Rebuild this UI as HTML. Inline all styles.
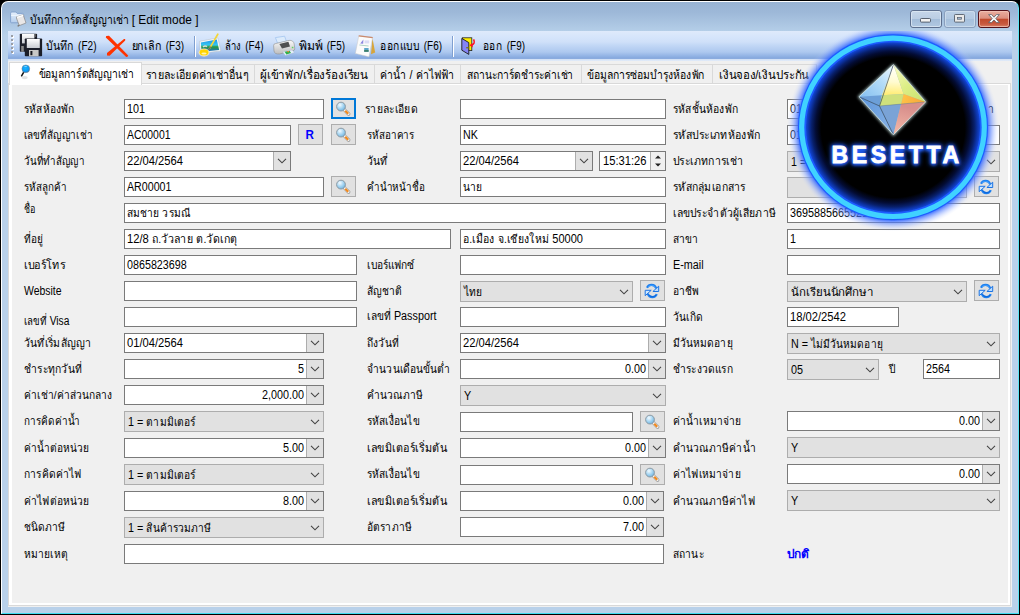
<!DOCTYPE html><html><head><meta charset="utf-8"><title>form</title><style>
*{box-sizing:border-box;margin:0;padding:0}
html,body{width:1020px;height:615px;overflow:hidden;background:#000}
body{font-family:"Liberation Sans",sans-serif;font-size:12px;color:#000;position:relative}
.a{position:absolute}
#win{position:absolute;left:0;top:0;width:1020px;height:615px;background:#000;overflow:hidden}
#frame{position:absolute;left:1px;top:1px;width:1018px;height:613px;border-radius:7px 7px 0 0;background:linear-gradient(#98b3d3 0px,#9db8d8 10px,#b4cee8 29px,#b9d1ea 34px);border:1px solid #fff;border-right-color:#5ee6f5;border-bottom-color:#3fdcf0}
#client{position:absolute;left:8px;top:31px;width:1004px;height:576px;background:#f0f0f0}
#tb{position:absolute;left:0;top:0;width:1004px;height:28px;background:linear-gradient(#dfeafb 0,#d6e5fb 6px,#cfe0f9 11px,#c3d8f6 14px,#adc8ef 21px,#92b3e5 25px,#86a8dd 27px,#8eaee0 28px)}
#tbl{position:absolute;left:0;top:28px;width:1004px;height:2px;background:linear-gradient(#cfdff5,#e2ecf9)}
.sep{position:absolute;top:5px;width:2px;height:21px;border-left:1px solid #7f9fd0;border-right:1px solid #fff}
.in{position:absolute;height:20px;background:#fff;border:1px solid #7a7a7a}
.dd{position:absolute;height:21px;background:#e1e1e1;border:1px solid #adadad}
.ab{position:absolute;top:0;right:0;width:17px;height:18px;background:#e1e1e1;border-left:1px solid #adadad}
.ab .ch{left:3px;top:6px}
.ch{position:absolute;width:10px;height:6px}
.btn{position:absolute;width:25px;height:21px;background:#e1e1e1;border:1px solid #adadad}
.btn.fo{border:2px solid #0078d7}
.btn .ic{position:absolute;left:3px;top:2px}
.btn.fo .ic{left:2px;top:1px}
.tab{position:absolute;top:33px;height:19px;border:1px solid #d9d9d9;border-bottom:none;background:#f0f0f0}
#tabsel{position:absolute;left:1px;top:31px;width:133px;height:23px;background:#fff;border:1px solid #d9d9d9;border-bottom:none}
#page{position:absolute;left:0;top:52px;width:1003px;height:523px;border:1px solid #d9d9d9;background:#fff}
#pagein{position:absolute;left:3px;top:1px;width:996px;height:518px;background:#f0f0f0}
#txt{position:absolute;left:0;top:0;width:1020px;height:615px;font-family:"Liberation Sans",sans-serif}
</style></head><body>
<div id="win"><div id="frame"></div>
<div id="client"><div id="tb"></div><div id="tbl"></div>
<div class="sep" style="left:186px"></div>
<div class="sep" style="left:444px"></div>
<div id="page"><div id="pagein"></div></div>
<div class="tab" style="left:133px;width:114px"></div>
<div class="tab" style="left:246px;width:121px"></div>
<div class="tab" style="left:366px;width:87px"></div>
<div class="tab" style="left:452px;width:122px"></div>
<div class="tab" style="left:573px;width:132px"></div>
<div class="tab" style="left:704px;width:105px"></div>
<div id="tabsel"></div>
</div>
<div class="in" style="left:124px;top:99px;width:200px;height:20px"></div>
<div class="btn fo" style="left:331px;top:98px"><svg class="ic" width="16" height="16" viewBox="0 0 16 16"><path d="M9.2 8.6 L13.6 13" stroke="#8c8c8c" stroke-width="3.4" stroke-linecap="round"/><path d="M9.6 9 L13.5 12.9" stroke="#f3f3f3" stroke-width="2.4" stroke-linecap="round"/><path d="M10.2 9.7 L13.2 12.7" stroke="#f28a1e" stroke-width="2.2" stroke-linecap="butt"/><circle cx="6" cy="5.6" r="4.4" fill="url(#lg)" stroke="#8d9aa3" stroke-width="1"/></svg></div>
<div class="in" style="left:460px;top:99px;width:206px;height:20px"></div>
<div class="in" style="left:787px;top:99px;width:93px;height:20px"></div>
<div class="in" style="left:124px;top:125px;width:167px;height:20px"></div>
<div class="btn" style="left:298px;top:124px"></div>
<div class="btn" style="left:331px;top:124px"><svg class="ic" width="16" height="16" viewBox="0 0 16 16"><path d="M9.2 8.6 L13.6 13" stroke="#8c8c8c" stroke-width="3.4" stroke-linecap="round"/><path d="M9.6 9 L13.5 12.9" stroke="#f3f3f3" stroke-width="2.4" stroke-linecap="round"/><path d="M10.2 9.7 L13.2 12.7" stroke="#f28a1e" stroke-width="2.2" stroke-linecap="butt"/><circle cx="6" cy="5.6" r="4.4" fill="url(#lg)" stroke="#8d9aa3" stroke-width="1"/></svg></div>
<div class="in" style="left:460px;top:125px;width:206px;height:20px"></div>
<div class="in" style="left:787px;top:125px;width:213px;height:20px"></div>
<div class="in" style="left:124px;top:151px;width:167px"><div class="ab"><svg class="ch" viewBox="0 0 10 6"><path d="M1 0.8 L5 4.8 L9 0.8" fill="none" stroke="#444" stroke-width="1.1"/></svg></div></div>
<div class="in" style="left:460px;top:151px;width:133px"><div class="ab"><svg class="ch" viewBox="0 0 10 6"><path d="M1 0.8 L5 4.8 L9 0.8" fill="none" stroke="#444" stroke-width="1.1"/></svg></div></div>
<div class="in" style="left:599px;top:151px;width:67px"><div class="ab" style="width:15px;background:#f0f0f0"><svg class="a" style="left:3px;top:2px" width="8" height="14" viewBox="0 0 8 14"><path d="M1 4.6 L4 1.6 L7 4.6Z M1 9.6 L4 12.6 L7 9.6Z" fill="#222"/></svg></div></div>
<div class="dd" style="left:787px;top:151px;width:213px"><svg class="ch" style="right:3px;top:7px" viewBox="0 0 10 6"><path d="M1 0.8 L5 4.8 L9 0.8" fill="none" stroke="#444" stroke-width="1.1"/></svg></div>
<div class="in" style="left:124px;top:177px;width:200px;height:20px"></div>
<div class="btn" style="left:331px;top:176px"><svg class="ic" width="16" height="16" viewBox="0 0 16 16"><path d="M9.2 8.6 L13.6 13" stroke="#8c8c8c" stroke-width="3.4" stroke-linecap="round"/><path d="M9.6 9 L13.5 12.9" stroke="#f3f3f3" stroke-width="2.4" stroke-linecap="round"/><path d="M10.2 9.7 L13.2 12.7" stroke="#f28a1e" stroke-width="2.2" stroke-linecap="butt"/><circle cx="6" cy="5.6" r="4.4" fill="url(#lg)" stroke="#8d9aa3" stroke-width="1"/></svg></div>
<div class="in" style="left:460px;top:177px;width:206px;height:20px"></div>
<div class="dd" style="left:787px;top:177px;width:180px"><svg class="ch" style="right:3px;top:7px" viewBox="0 0 10 6"><path d="M1 0.8 L5 4.8 L9 0.8" fill="none" stroke="#444" stroke-width="1.1"/></svg></div>
<div class="btn" style="left:974px;top:176px"><svg class="ic" width="16" height="16" viewBox="0 0 16 16"><path d="M3 4.7 C4.6 1.1 10.6 0.5 12.3 5.4" fill="none" stroke="#1c7ff0" stroke-width="2.1"/><path d="M4 4 C5.6 1.9 9.6 1.6 11.4 4.4" fill="none" stroke="#49a6ff" stroke-width="0.9"/><polygon points="14.7,3.2 14.7,8.5 8.9,8.5" fill="#b9dcff" stroke="#1c74e4" stroke-width="1" stroke-linejoin="round"/><path d="M12.8 11.2 C11.4 14.9 5.4 15.5 3.7 10.6" fill="none" stroke="#1c7ff0" stroke-width="2.1"/><path d="M12 12 C10.4 14.1 6.4 14.4 4.6 11.6" fill="none" stroke="#0b5fd0" stroke-width="0.9"/><polygon points="1.2,7.3 1.2,12.7 7.2,7.3" fill="#cfe8ff" stroke="#1c74e4" stroke-width="1" stroke-linejoin="round"/></svg></div>
<div class="in" style="left:124px;top:203px;width:542px;height:20px"></div>
<div class="in" style="left:787px;top:203px;width:213px;height:20px"></div>
<div class="in" style="left:124px;top:229px;width:327px;height:20px"></div>
<div class="in" style="left:460px;top:229px;width:206px;height:20px"></div>
<div class="in" style="left:787px;top:229px;width:213px;height:20px"></div>
<div class="in" style="left:124px;top:255px;width:233px;height:20px"></div>
<div class="in" style="left:460px;top:255px;width:206px;height:20px"></div>
<div class="in" style="left:787px;top:255px;width:213px;height:20px"></div>
<div class="in" style="left:124px;top:281px;width:233px;height:20px"></div>
<div class="dd" style="left:460px;top:281px;width:173px"><svg class="ch" style="right:3px;top:7px" viewBox="0 0 10 6"><path d="M1 0.8 L5 4.8 L9 0.8" fill="none" stroke="#444" stroke-width="1.1"/></svg></div>
<div class="btn" style="left:640px;top:280px"><svg class="ic" width="16" height="16" viewBox="0 0 16 16"><path d="M3 4.7 C4.6 1.1 10.6 0.5 12.3 5.4" fill="none" stroke="#1c7ff0" stroke-width="2.1"/><path d="M4 4 C5.6 1.9 9.6 1.6 11.4 4.4" fill="none" stroke="#49a6ff" stroke-width="0.9"/><polygon points="14.7,3.2 14.7,8.5 8.9,8.5" fill="#b9dcff" stroke="#1c74e4" stroke-width="1" stroke-linejoin="round"/><path d="M12.8 11.2 C11.4 14.9 5.4 15.5 3.7 10.6" fill="none" stroke="#1c7ff0" stroke-width="2.1"/><path d="M12 12 C10.4 14.1 6.4 14.4 4.6 11.6" fill="none" stroke="#0b5fd0" stroke-width="0.9"/><polygon points="1.2,7.3 1.2,12.7 7.2,7.3" fill="#cfe8ff" stroke="#1c74e4" stroke-width="1" stroke-linejoin="round"/></svg></div>
<div class="dd" style="left:787px;top:281px;width:180px"><svg class="ch" style="right:3px;top:7px" viewBox="0 0 10 6"><path d="M1 0.8 L5 4.8 L9 0.8" fill="none" stroke="#444" stroke-width="1.1"/></svg></div>
<div class="btn" style="left:974px;top:280px"><svg class="ic" width="16" height="16" viewBox="0 0 16 16"><path d="M3 4.7 C4.6 1.1 10.6 0.5 12.3 5.4" fill="none" stroke="#1c7ff0" stroke-width="2.1"/><path d="M4 4 C5.6 1.9 9.6 1.6 11.4 4.4" fill="none" stroke="#49a6ff" stroke-width="0.9"/><polygon points="14.7,3.2 14.7,8.5 8.9,8.5" fill="#b9dcff" stroke="#1c74e4" stroke-width="1" stroke-linejoin="round"/><path d="M12.8 11.2 C11.4 14.9 5.4 15.5 3.7 10.6" fill="none" stroke="#1c7ff0" stroke-width="2.1"/><path d="M12 12 C10.4 14.1 6.4 14.4 4.6 11.6" fill="none" stroke="#0b5fd0" stroke-width="0.9"/><polygon points="1.2,7.3 1.2,12.7 7.2,7.3" fill="#cfe8ff" stroke="#1c74e4" stroke-width="1" stroke-linejoin="round"/></svg></div>
<div class="in" style="left:124px;top:307px;width:233px;height:20px"></div>
<div class="in" style="left:460px;top:307px;width:206px;height:20px"></div>
<div class="in" style="left:787px;top:307px;width:112px;height:20px"></div>
<div class="in" style="left:124px;top:333px;width:200px"><div class="ab"><svg class="ch" viewBox="0 0 10 6"><path d="M1 0.8 L5 4.8 L9 0.8" fill="none" stroke="#444" stroke-width="1.1"/></svg></div></div>
<div class="in" style="left:460px;top:333px;width:206px"><div class="ab"><svg class="ch" viewBox="0 0 10 6"><path d="M1 0.8 L5 4.8 L9 0.8" fill="none" stroke="#444" stroke-width="1.1"/></svg></div></div>
<div class="dd" style="left:787px;top:333px;width:213px"><svg class="ch" style="right:3px;top:7px" viewBox="0 0 10 6"><path d="M1 0.8 L5 4.8 L9 0.8" fill="none" stroke="#444" stroke-width="1.1"/></svg></div>
<div class="in" style="left:124px;top:359px;width:200px"><div class="ab"><svg class="ch" viewBox="0 0 10 6"><path d="M1 0.8 L5 4.8 L9 0.8" fill="none" stroke="#444" stroke-width="1.1"/></svg></div></div>
<div class="in" style="left:460px;top:359px;width:206px"><div class="ab"><svg class="ch" viewBox="0 0 10 6"><path d="M1 0.8 L5 4.8 L9 0.8" fill="none" stroke="#444" stroke-width="1.1"/></svg></div></div>
<div class="dd" style="left:787px;top:359px;width:92px"><svg class="ch" style="right:3px;top:7px" viewBox="0 0 10 6"><path d="M1 0.8 L5 4.8 L9 0.8" fill="none" stroke="#444" stroke-width="1.1"/></svg></div>
<div class="in" style="left:923px;top:359px;width:77px;height:20px"></div>
<div class="in" style="left:124px;top:385px;width:200px"><div class="ab"><svg class="ch" viewBox="0 0 10 6"><path d="M1 0.8 L5 4.8 L9 0.8" fill="none" stroke="#444" stroke-width="1.1"/></svg></div></div>
<div class="dd" style="left:460px;top:385px;width:206px"><svg class="ch" style="right:3px;top:7px" viewBox="0 0 10 6"><path d="M1 0.8 L5 4.8 L9 0.8" fill="none" stroke="#444" stroke-width="1.1"/></svg></div>
<div class="dd" style="left:124px;top:411px;width:200px"><svg class="ch" style="right:3px;top:7px" viewBox="0 0 10 6"><path d="M1 0.8 L5 4.8 L9 0.8" fill="none" stroke="#444" stroke-width="1.1"/></svg></div>
<div class="in" style="left:460px;top:412px;width:173px;height:20px"></div>
<div class="btn" style="left:640px;top:411px"><svg class="ic" width="16" height="16" viewBox="0 0 16 16"><path d="M9.2 8.6 L13.6 13" stroke="#8c8c8c" stroke-width="3.4" stroke-linecap="round"/><path d="M9.6 9 L13.5 12.9" stroke="#f3f3f3" stroke-width="2.4" stroke-linecap="round"/><path d="M10.2 9.7 L13.2 12.7" stroke="#f28a1e" stroke-width="2.2" stroke-linecap="butt"/><circle cx="6" cy="5.6" r="4.4" fill="url(#lg)" stroke="#8d9aa3" stroke-width="1"/></svg></div>
<div class="in" style="left:787px;top:411px;width:213px"><div class="ab"><svg class="ch" viewBox="0 0 10 6"><path d="M1 0.8 L5 4.8 L9 0.8" fill="none" stroke="#444" stroke-width="1.1"/></svg></div></div>
<div class="in" style="left:124px;top:438px;width:200px"><div class="ab"><svg class="ch" viewBox="0 0 10 6"><path d="M1 0.8 L5 4.8 L9 0.8" fill="none" stroke="#444" stroke-width="1.1"/></svg></div></div>
<div class="in" style="left:460px;top:438px;width:206px"><div class="ab"><svg class="ch" viewBox="0 0 10 6"><path d="M1 0.8 L5 4.8 L9 0.8" fill="none" stroke="#444" stroke-width="1.1"/></svg></div></div>
<div class="dd" style="left:787px;top:437px;width:213px"><svg class="ch" style="right:3px;top:7px" viewBox="0 0 10 6"><path d="M1 0.8 L5 4.8 L9 0.8" fill="none" stroke="#444" stroke-width="1.1"/></svg></div>
<div class="dd" style="left:124px;top:464px;width:200px"><svg class="ch" style="right:3px;top:7px" viewBox="0 0 10 6"><path d="M1 0.8 L5 4.8 L9 0.8" fill="none" stroke="#444" stroke-width="1.1"/></svg></div>
<div class="in" style="left:460px;top:465px;width:173px;height:20px"></div>
<div class="btn" style="left:640px;top:464px"><svg class="ic" width="16" height="16" viewBox="0 0 16 16"><path d="M9.2 8.6 L13.6 13" stroke="#8c8c8c" stroke-width="3.4" stroke-linecap="round"/><path d="M9.6 9 L13.5 12.9" stroke="#f3f3f3" stroke-width="2.4" stroke-linecap="round"/><path d="M10.2 9.7 L13.2 12.7" stroke="#f28a1e" stroke-width="2.2" stroke-linecap="butt"/><circle cx="6" cy="5.6" r="4.4" fill="url(#lg)" stroke="#8d9aa3" stroke-width="1"/></svg></div>
<div class="in" style="left:787px;top:464px;width:213px"><div class="ab"><svg class="ch" viewBox="0 0 10 6"><path d="M1 0.8 L5 4.8 L9 0.8" fill="none" stroke="#444" stroke-width="1.1"/></svg></div></div>
<div class="in" style="left:124px;top:491px;width:200px"><div class="ab"><svg class="ch" viewBox="0 0 10 6"><path d="M1 0.8 L5 4.8 L9 0.8" fill="none" stroke="#444" stroke-width="1.1"/></svg></div></div>
<div class="in" style="left:460px;top:491px;width:204px"><div class="ab"><svg class="ch" viewBox="0 0 10 6"><path d="M1 0.8 L5 4.8 L9 0.8" fill="none" stroke="#444" stroke-width="1.1"/></svg></div></div>
<div class="dd" style="left:787px;top:490px;width:213px"><svg class="ch" style="right:3px;top:7px" viewBox="0 0 10 6"><path d="M1 0.8 L5 4.8 L9 0.8" fill="none" stroke="#444" stroke-width="1.1"/></svg></div>
<div class="dd" style="left:124px;top:517px;width:200px"><svg class="ch" style="right:3px;top:7px" viewBox="0 0 10 6"><path d="M1 0.8 L5 4.8 L9 0.8" fill="none" stroke="#444" stroke-width="1.1"/></svg></div>
<div class="in" style="left:460px;top:517px;width:204px"><div class="ab"><svg class="ch" viewBox="0 0 10 6"><path d="M1 0.8 L5 4.8 L9 0.8" fill="none" stroke="#444" stroke-width="1.1"/></svg></div></div>
<div class="in" style="left:124px;top:544px;width:540px;height:20px"></div>
<svg id="icons" style="position:absolute;left:0;top:0" width="1020" height="615" viewBox="0 0 1020 615">
<defs>
<radialGradient id="lg" cx="0.38" cy="0.32" r="0.75"><stop offset="0" stop-color="#f4fbff"/><stop offset="0.55" stop-color="#a2d3f1"/><stop offset="1" stop-color="#66aede"/></radialGradient>
<linearGradient id="fl" x1="0" y1="0" x2="0" y2="1"><stop offset="0" stop-color="#ffffff"/><stop offset="1" stop-color="#c9ccd2"/></linearGradient>
<linearGradient id="fo" x1="0" y1="0" x2="0" y2="1"><stop offset="0" stop-color="#e6f0fc"/><stop offset="1" stop-color="#b4cdec"/></linearGradient>
<linearGradient id="pr" x1="0" y1="0" x2="0" y2="1"><stop offset="0" stop-color="#fafafa"/><stop offset="1" stop-color="#bdbdbd"/></linearGradient>
<radialGradient id="ball" cx="0.45" cy="0.4" r="0.6"><stop offset="0" stop-color="#19b4ff"/><stop offset="0.7" stop-color="#0a9af6"/><stop offset="1" stop-color="#2a6fb0"/></radialGradient>
<linearGradient id="sky" x1="0" y1="0" x2="0" y2="1"><stop offset="0" stop-color="#1d8fe8"/><stop offset="0.45" stop-color="#35c6f2"/><stop offset="0.6" stop-color="#2a9a3c"/><stop offset="1" stop-color="#1c6ad8"/></linearGradient>
</defs>
<!-- window buttons -->
<defs>
<linearGradient id="wb1" x1="0" y1="0" x2="0" y2="1"><stop offset="0" stop-color="#c6d6e9"/><stop offset="0.48" stop-color="#bacde3"/><stop offset="0.5" stop-color="#a3bcd9"/><stop offset="1" stop-color="#b2c9e2"/></linearGradient>
<linearGradient id="wb2" x1="0" y1="0" x2="0" y2="1"><stop offset="0" stop-color="#bcd0e6"/><stop offset="0.48" stop-color="#b3c9e2"/><stop offset="0.5" stop-color="#a6c0dc"/><stop offset="1" stop-color="#b0c8e2"/></linearGradient>
<linearGradient id="wb3" x1="0" y1="0" x2="0" y2="1"><stop offset="0" stop-color="#eab0a2"/><stop offset="0.46" stop-color="#dc8f7e"/><stop offset="0.5" stop-color="#c0492c"/><stop offset="0.8" stop-color="#c85a40"/><stop offset="1" stop-color="#dc8a70"/></linearGradient>
</defs>
<g>
<rect x="910.5" y="10.5" width="31" height="17" rx="2.5" fill="url(#wb1)" stroke="#5d6f8e" stroke-width="1"/>
<rect x="911.5" y="11.5" width="29" height="15" rx="1.8" fill="none" stroke="#dfe9f4" stroke-width="1" opacity="0.75"/>
<rect x="920.5" y="18.5" width="10" height="3.6" rx="0.8" fill="#f2f2f2" stroke="#4a5260" stroke-width="0.9"/>
<rect x="944.5" y="10.5" width="31" height="17" rx="2.5" fill="url(#wb2)" stroke="#8a9fbd" stroke-width="1"/>
<rect x="945.5" y="11.5" width="29" height="15" rx="1.8" fill="none" stroke="#d4e2f0" stroke-width="1" opacity="0.7"/>
<rect x="954.5" y="14.5" width="10" height="7.6" rx="0.8" fill="#e9e9e9" stroke="#555d6a" stroke-width="0.9"/>
<rect x="957.6" y="17.4" width="3.8" height="1.8" fill="#a9bfda" stroke="#555d6a" stroke-width="0.7"/>
<rect x="978.5" y="10.5" width="31" height="17" rx="2.5" fill="url(#wb3)" stroke="#54121a" stroke-width="1"/>
<rect x="979.5" y="11.5" width="29" height="15" rx="1.8" fill="none" stroke="#f4c8bc" stroke-width="1" opacity="0.7"/>
<path d="M988.6 14.6 L991.6 14.6 L994 17.2 L996.4 14.6 L999.4 14.6 L995.8 18.6 L999.4 22.6 L996.4 22.6 L994 20 L991.6 22.6 L988.6 22.6 L992.2 18.6 Z" fill="#f6f6f6" stroke="#5a6068" stroke-width="0.8"/>
</g>
<!-- title icon -->
<g>
<path d="M10.6 13.2 Q10.6 12 11.8 12 L16 12 L17.2 13.4 L22.6 13.4 Q23.6 13.4 23.6 14.4 L23.6 22 Q23.6 22.8 22.8 22.8 L11.4 22.8 Q10.6 22.8 10.6 22 Z" fill="url(#fo)" stroke="#7f9fcc" stroke-width="0.9"/>
<path d="M11 15.4 L23.4 15.4" stroke="#eef5fd" stroke-width="1"/>
<path d="M16.4 18 Q16 16.4 17.6 16.6 L23 14.8 Q24 15 23.6 16 L26 23 L19.4 25.6 Q18.6 26.8 17.6 26 L19 24.8 Z" fill="#e9e7e7" stroke="#8a8888" stroke-width="0.7"/>
<path d="M17 17.4 L23.2 15.4" stroke="#fff" stroke-width="1.2"/>
<path d="M17.8 26 L19.6 25" stroke="#777" stroke-width="1.1"/>
</g>
<!-- toolbar grip -->
<g fill="#fff"><rect x="12" y="36" width="2" height="2"/><rect x="12" y="40" width="2" height="2"/><rect x="12" y="44" width="2" height="2"/><rect x="12" y="48" width="2" height="2"/><rect x="12" y="52" width="2" height="2"/></g>
<g fill="#9a9ea6"><rect x="11" y="35" width="2" height="2"/><rect x="11" y="39" width="2" height="2"/><rect x="11" y="43" width="2" height="2"/><rect x="11" y="47" width="2" height="2"/><rect x="11" y="51" width="2" height="2"/></g>
<!-- save icon: two floppies -->
<g>
<rect x="19.8" y="33.8" width="17.3" height="18" rx="0.8" fill="#1d202b"/>
<rect x="22" y="34" width="12.4" height="9.4" fill="url(#fl)"/>
<rect x="35" y="34" width="1" height="3" fill="#555"/>
<rect x="24.8" y="38.5" width="17.3" height="17.8" rx="0.8" fill="#1b1e29"/>
<rect x="26.8" y="39" width="13" height="9" fill="url(#fl)"/>
<rect x="29" y="50" width="9.6" height="6.3" fill="#c8c8c6"/>
<rect x="30.4" y="51" width="2" height="4.2" fill="#16181f"/>
<rect x="21.2" y="46" width="2.6" height="5.8" fill="#8b8b8b"/>
</g>
<!-- cancel X -->
<g fill="#ff3300">
<polygon points="105.8,37.6 106.2,35.9 109,35.8 128.2,55.4 127.6,56.8 126.2,57"/>
<polygon points="107,53 107,55.6 109.6,55.8 125.2,40.4 125.2,38.9 124,38.9"/>
</g>
<!-- clear icon -->
<g>
<polygon points="199.4,41.4 217.9,37.8 220.8,51 200.4,53.2" fill="#fbfbfb" stroke="#b9c2cc" stroke-width="0.6"/>
<polygon points="200.8,42.4 216.8,39.4 219.2,50 201.6,51.8" fill="url(#sky)"/>
<path d="M217.8 34.2 L209.4 48.6" stroke="#f2d53a" stroke-width="1.7" stroke-linecap="round"/>
<path d="M210.6 46.6 L208.8 49.6" stroke="#6a6a6a" stroke-width="1.3"/>
<path d="M203 47 Q205 45.2 207 46.6" stroke="#d8d8d8" stroke-width="1.6" fill="none"/>
<ellipse cx="204" cy="52.6" rx="5.4" ry="3.9" fill="#f7f7f7" stroke="#c9c9c9" stroke-width="0.5"/>
<ellipse cx="204" cy="52.4" rx="4.6" ry="3.1" fill="#ffd400"/>
<ellipse cx="204" cy="53.6" rx="2.6" ry="1" fill="#fff4b0"/>
</g>
<!-- printer -->
<g>
<polygon points="275.4,37.6 284.6,36.2 286.4,41.4 277.6,43.2" fill="#dcebfb" stroke="#9cc0ee" stroke-width="0.7"/>
<path d="M273.6 45.6 Q273.4 44 275.4 43.6 L289 40.4 Q293.4 40 294.2 44 L294.8 49 Q294.6 50.4 293 50.8 L279.4 54 Q274.6 54.4 274 51 Z" fill="url(#pr)" stroke="#8f8f8f" stroke-width="0.6"/>
<polygon points="279.4,44 288.4,41.8 290,46.6 282,48.6" fill="#505050"/>
<rect x="291.8" y="46.8" width="1.6" height="1.4" fill="#5fd05f"/>
<polygon points="282.6,51.8 292.2,50 294.4,52.6 285.4,55.6" fill="#e6effa" stroke="#a8b8cc" stroke-width="0.4"/>
<polygon points="284.6,51.8 289.6,50.8 291,53 286.4,54.6" fill="#2fb14a"/>
<rect x="287.4" y="51" width="1.6" height="1.2" fill="#f08030"/>
</g>
<!-- design icon -->
<g>
<polygon points="372.4,38 375.2,52.6 371,54.2" fill="#d7a53c"/>
<polygon points="358.8,35.6 372.6,37.4 369,56.8 355.4,53.4" fill="#fbfbfb" stroke="#c9c9c9" stroke-width="0.5"/>
<polygon points="358.8,35.2 372.8,37 372.6,38.2 358.6,36.4" fill="#c98a6e"/>
<path d="M360.2 43.6 L363.4 39.4 L363.2 43.8 Z" fill="#8a86e0"/>
<rect x="364.6" y="40.4" width="4.6" height="3" fill="#dcdcf6"/>
<path d="M359.4 45 L368.6 46" stroke="#9cc8b8" stroke-width="0.8"/>
<rect x="364.2" y="48" width="4.4" height="3.8" fill="#5aa6c8"/>
<rect x="364.2" y="50" width="4.4" height="1.8" fill="#3e7f6a"/>
</g>
<!-- exit -->
<g>
<rect x="462.4" y="37.8" width="9.4" height="12.8" fill="#ffee00" stroke="#222" stroke-width="0.8"/>
<polygon points="461.8,38.4 468.8,42.6 468.8,54.4 461.8,50.2" fill="#8484f6" stroke="#1c1c1c" stroke-width="0.9"/>
<rect x="466.2" y="47" width="2.2" height="1.4" fill="#7a7a20"/>
<path d="M473.6 39.4 Q475.6 43.8 471.6 45.2" stroke="#ff1020" stroke-width="1.5" fill="none"/>
<polygon points="469.4,45.2 472.4,43 472.8,47.4" fill="#ff1020"/>
</g>
<!-- tab icon -->
<g>
<ellipse cx="24.6" cy="77.6" rx="3" ry="1.6" fill="#d0d0d0" opacity="0.6"/>
<path d="M23.6 72.4 L21.6 75.8" stroke="#111" stroke-width="1.5" stroke-linecap="round"/>
<circle cx="25.8" cy="68.8" r="3.9" fill="url(#ball)" stroke="#7d8a90" stroke-width="0.5"/>
<rect x="24.4" y="66" width="2.4" height="0.8" fill="#bfe8ff" opacity="0.8"/>
</g>
</svg>

<svg id="txt" width="1020" height="615" viewBox="0 0 1020 615"><text x="30" y="24" font-size="12.5" textLength="98.4" lengthAdjust="spacingAndGlyphs">บันทึกการ์ดสัญญาเช่า</text>
<text x="131.7" y="24" font-size="12.5" textLength="66.8" lengthAdjust="spacingAndGlyphs">[ Edit mode ]</text>
<text x="46" y="50" font-size="12.5" textLength="27.7" lengthAdjust="spacingAndGlyphs">บันทึก</text>
<text x="78.1" y="50" font-size="12" textLength="18.4" lengthAdjust="spacingAndGlyphs">(F2)</text>
<text x="131.5" y="50" font-size="12.5" textLength="29.9" lengthAdjust="spacingAndGlyphs">ยกเลิก</text>
<text x="165.8" y="50" font-size="12" textLength="18.2" lengthAdjust="spacingAndGlyphs">(F3)</text>
<text x="225" y="50" font-size="12.5" textLength="15.9" lengthAdjust="spacingAndGlyphs">ล้าง</text>
<text x="245.3" y="50" font-size="12" textLength="18.2" lengthAdjust="spacingAndGlyphs">(F4)</text>
<text x="299" y="50" font-size="12.5" textLength="23.4" lengthAdjust="spacingAndGlyphs">พิมพ์</text>
<text x="326.8" y="50" font-size="12" textLength="18.2" lengthAdjust="spacingAndGlyphs">(F5)</text>
<text x="380" y="50" font-size="12.5" textLength="39.4" lengthAdjust="spacingAndGlyphs">ออกแบบ</text>
<text x="423.8" y="50" font-size="12" textLength="18.2" lengthAdjust="spacingAndGlyphs">(F6)</text>
<text x="483" y="50" font-size="12.5" textLength="19.4" lengthAdjust="spacingAndGlyphs">ออก</text>
<text x="506.8" y="50" font-size="12" textLength="18.2" lengthAdjust="spacingAndGlyphs">(F9)</text>
<text x="38.5" y="78" font-size="12" textLength="95.5" lengthAdjust="spacingAndGlyphs">ข้อมูลการ์ดสัญญาเช่า</text>
<text x="146" y="79" font-size="12" textLength="102.0" lengthAdjust="spacingAndGlyphs">รายละเอียดค่าเช่าอื่นๆ</text>
<text x="260" y="79" font-size="12" textLength="108.0" lengthAdjust="spacingAndGlyphs">ผู้เข้าพัก/เรื่องร้องเรียน</text>
<text x="380" y="79" font-size="12" textLength="26.2" lengthAdjust="spacingAndGlyphs">ค่าน้ำ</text>
<text x="409.4" y="79" font-size="12" textLength="3.0" lengthAdjust="spacingAndGlyphs">/</text>
<text x="415.6" y="79" font-size="12" textLength="38.4" lengthAdjust="spacingAndGlyphs">ค่าไฟฟ้า</text>
<text x="467" y="79" font-size="12" textLength="106.5" lengthAdjust="spacingAndGlyphs">สถานะการ์ดชำระค่าเช่า</text>
<text x="587" y="79" font-size="12" textLength="117.5" lengthAdjust="spacingAndGlyphs">ข้อมูลการซ่อมบำรุงห้องพัก</text>
<text x="719" y="79" font-size="12" textLength="90.0" lengthAdjust="spacingAndGlyphs">เงินจอง/เงินประกัน</text>
<text x="24" y="113" font-size="11.6" textLength="50.3" lengthAdjust="spacingAndGlyphs">รหัสห้องพัก</text>
<text x="127" y="113" font-size="12" textLength="18.0" lengthAdjust="spacingAndGlyphs">101</text>
<text x="365" y="113" font-size="11.6" textLength="52.8" lengthAdjust="spacingAndGlyphs">รายละเอียด</text>
<text x="673" y="113" font-size="11.6" textLength="65.1" lengthAdjust="spacingAndGlyphs">รหัสชั้นห้องพัก</text>
<text x="790" y="113" font-size="12" textLength="12.0" lengthAdjust="spacingAndGlyphs">01</text>
<text x="987.5" y="113" font-size="11.6" textLength="6.2" lengthAdjust="spacingAndGlyphs">า</text>
<text x="24" y="139" font-size="11.6" textLength="68.7" lengthAdjust="spacingAndGlyphs">เลขที่สัญญาเช่า</text>
<text x="127" y="139" font-size="12" textLength="43.5" lengthAdjust="spacingAndGlyphs">AC00001</text>
<text x="367" y="139" font-size="11.6" textLength="47.5" lengthAdjust="spacingAndGlyphs">รหัสอาคาร</text>
<text x="463" y="139" font-size="12" textLength="14.8" lengthAdjust="spacingAndGlyphs">NK</text>
<text x="673" y="139" font-size="11.6" textLength="87.6" lengthAdjust="spacingAndGlyphs">รหัสประเภทห้องพัก</text>
<text x="790" y="139" font-size="12" textLength="12.0" lengthAdjust="spacingAndGlyphs">01</text>
<text x="24" y="165" font-size="11.6" textLength="60.8" lengthAdjust="spacingAndGlyphs">วันที่ทำสัญญา</text>
<text x="127" y="165" font-size="12" textLength="56.0" lengthAdjust="spacingAndGlyphs">22/04/2564</text>
<text x="367" y="165" font-size="11.6" textLength="20.5" lengthAdjust="spacingAndGlyphs">วันที่</text>
<text x="463" y="165" font-size="12" textLength="56.0" lengthAdjust="spacingAndGlyphs">22/04/2564</text>
<text x="603" y="165" font-size="12" textLength="43.5" lengthAdjust="spacingAndGlyphs">15:31:26</text>
<text x="673" y="165" font-size="11.6" textLength="70.6" lengthAdjust="spacingAndGlyphs">ประเภทการเช่า</text>
<text x="791" y="165.5" font-size="12" textLength="15.3" lengthAdjust="spacingAndGlyphs">1 =</text>
<text x="809.4" y="165.5" font-size="11.6" textLength="41.4" lengthAdjust="spacingAndGlyphs">รายเดือน</text>
<text x="24" y="191" font-size="11.6" textLength="42.5" lengthAdjust="spacingAndGlyphs">รหัสลูกค้า</text>
<text x="127" y="191" font-size="12" textLength="44.5" lengthAdjust="spacingAndGlyphs">AR00001</text>
<text x="367" y="191" font-size="11.6" textLength="57.7" lengthAdjust="spacingAndGlyphs">คำนำหน้าชื่อ</text>
<text x="463" y="191" font-size="11.6" textLength="19.4" lengthAdjust="spacingAndGlyphs">นาย</text>
<text x="673" y="191" font-size="11.6" textLength="72.8" lengthAdjust="spacingAndGlyphs">รหัสกลุ่มเอกสาร</text>
<text x="24" y="213" font-size="11.6" textLength="11.6" lengthAdjust="spacingAndGlyphs">ชื่อ</text>
<text x="127" y="217" font-size="11.6" textLength="63.6" lengthAdjust="spacingAndGlyphs">สมชาย วรมณี</text>
<text x="673" y="217" font-size="11.6" textLength="103.1" lengthAdjust="spacingAndGlyphs">เลขประจำตัวผู้เสียภาษี</text>
<text x="790" y="217" font-size="12" textLength="78.0" lengthAdjust="spacingAndGlyphs">3695885665521</text>
<text x="24" y="243" font-size="11.6" textLength="19.0" lengthAdjust="spacingAndGlyphs">ที่อยู่</text>
<text x="127" y="243" font-size="12" textLength="21.8" lengthAdjust="spacingAndGlyphs">12/8</text>
<text x="151.9" y="243" font-size="11.6" textLength="85.6" lengthAdjust="spacingAndGlyphs">ถ.วัวลาย ต.วัดเกตุ</text>
<text x="463" y="243" font-size="11.6" textLength="86.2" lengthAdjust="spacingAndGlyphs">อ.เมือง จ.เชียงใหม่</text>
<text x="552.3" y="243" font-size="12" textLength="30.7" lengthAdjust="spacingAndGlyphs">50000</text>
<text x="673" y="243" font-size="11.6" textLength="25.5" lengthAdjust="spacingAndGlyphs">สาขา</text>
<text x="790" y="243" font-size="12" textLength="6.0" lengthAdjust="spacingAndGlyphs">1</text>
<text x="24" y="269" font-size="11.6" textLength="41.2" lengthAdjust="spacingAndGlyphs">เบอร์โทร</text>
<text x="127" y="269" font-size="12" textLength="59.7" lengthAdjust="spacingAndGlyphs">0865823698</text>
<text x="367" y="269" font-size="11.6" textLength="47.5" lengthAdjust="spacingAndGlyphs">เบอร์แฟกซ์</text>
<text x="673" y="269" font-size="12" textLength="30.6" lengthAdjust="spacingAndGlyphs">E-mail</text>
<text x="24" y="295" font-size="12" textLength="37.6" lengthAdjust="spacingAndGlyphs">Website</text>
<text x="367" y="295" font-size="11.6" textLength="35.2" lengthAdjust="spacingAndGlyphs">สัญชาติ</text>
<text x="464" y="295.5" font-size="11.6" textLength="18.5" lengthAdjust="spacingAndGlyphs">ไทย</text>
<text x="673" y="295" font-size="11.6" textLength="26.4" lengthAdjust="spacingAndGlyphs">อาชีพ</text>
<text x="791" y="295.5" font-size="11.6" textLength="83.0" lengthAdjust="spacingAndGlyphs">นักเรียนนักศึกษา</text>
<text x="24" y="325" font-size="11.6" textLength="22.5" lengthAdjust="spacingAndGlyphs">เลขที่</text>
<text x="49.7" y="325" font-size="12" textLength="19.7" lengthAdjust="spacingAndGlyphs">Visa</text>
<text x="367" y="320" font-size="11.6" textLength="23.8" lengthAdjust="spacingAndGlyphs">เลขที่</text>
<text x="393.9" y="320" font-size="12" textLength="42.6" lengthAdjust="spacingAndGlyphs">Passport</text>
<text x="673" y="321" font-size="11.6" textLength="29.9" lengthAdjust="spacingAndGlyphs">วันเกิด</text>
<text x="790" y="321" font-size="12" textLength="56.0" lengthAdjust="spacingAndGlyphs">18/02/2542</text>
<text x="24" y="347" font-size="11.6" textLength="67.0" lengthAdjust="spacingAndGlyphs">วันที่เริ่มสัญญา</text>
<text x="127" y="347" font-size="12" textLength="56.0" lengthAdjust="spacingAndGlyphs">01/04/2564</text>
<text x="367" y="347" font-size="11.6" textLength="31.7" lengthAdjust="spacingAndGlyphs">ถึงวันที่</text>
<text x="463" y="347" font-size="12" textLength="56.0" lengthAdjust="spacingAndGlyphs">22/04/2564</text>
<text x="673" y="347" font-size="11.6" textLength="59.8" lengthAdjust="spacingAndGlyphs">มีวันหมดอายุ</text>
<text x="791" y="347.5" font-size="12" textLength="17.0" lengthAdjust="spacingAndGlyphs">N =</text>
<text x="811.1" y="347.5" font-size="11.6" textLength="71.7" lengthAdjust="spacingAndGlyphs">ไม่มีวันหมดอายุ</text>
<text x="24" y="373" font-size="11.6" textLength="57.9" lengthAdjust="spacingAndGlyphs">ชำระทุกวันที่</text>
<text x="304" y="373" font-size="12" text-anchor="end" textLength="6.0" lengthAdjust="spacingAndGlyphs">5</text>
<text x="367" y="373" font-size="11.6" textLength="83.6" lengthAdjust="spacingAndGlyphs">จำนวนเดือนขั้นต่ำ</text>
<text x="646" y="373" font-size="12" text-anchor="end" textLength="21.0" lengthAdjust="spacingAndGlyphs">0.00</text>
<text x="673" y="373" font-size="11.6" textLength="59.8" lengthAdjust="spacingAndGlyphs">ชำระงวดแรก</text>
<text x="791" y="373.5" font-size="12" textLength="12.0" lengthAdjust="spacingAndGlyphs">05</text>
<text x="889" y="373" font-size="11.6" textLength="6.2" lengthAdjust="spacingAndGlyphs">ปี</text>
<text x="926" y="373" font-size="12" textLength="24.0" lengthAdjust="spacingAndGlyphs">2564</text>
<text x="24" y="399" font-size="11.6" textLength="88.7" lengthAdjust="spacingAndGlyphs">ค่าเช่า/ค่าส่วนกลาง</text>
<text x="304" y="399" font-size="12" text-anchor="end" textLength="42.0" lengthAdjust="spacingAndGlyphs">2,000.00</text>
<text x="367" y="399" font-size="11.6" textLength="56.3" lengthAdjust="spacingAndGlyphs">คำนวณภาษี</text>
<text x="464" y="399.5" font-size="12" textLength="7.2" lengthAdjust="spacingAndGlyphs">Y</text>
<text x="24" y="425" font-size="11.6" textLength="56.4" lengthAdjust="spacingAndGlyphs">การคิดค่าน้ำ</text>
<text x="128" y="425.5" font-size="12" textLength="15.3" lengthAdjust="spacingAndGlyphs">1 =</text>
<text x="146.4" y="425.5" font-size="11.6" textLength="49.3" lengthAdjust="spacingAndGlyphs">ตามมิเตอร์</text>
<text x="367" y="425" font-size="11.6" textLength="52.8" lengthAdjust="spacingAndGlyphs">รหัสเงื่อนไข</text>
<text x="673" y="425" font-size="11.6" textLength="68.6" lengthAdjust="spacingAndGlyphs">ค่าน้ำเหมาจ่าย</text>
<text x="980" y="425" font-size="12" text-anchor="end" textLength="21.0" lengthAdjust="spacingAndGlyphs">0.00</text>
<text x="24" y="452" font-size="11.6" textLength="65.5" lengthAdjust="spacingAndGlyphs">ค่าน้ำต่อหน่วย</text>
<text x="304" y="452" font-size="12" text-anchor="end" textLength="21.0" lengthAdjust="spacingAndGlyphs">5.00</text>
<text x="367" y="452" font-size="11.6" textLength="80.0" lengthAdjust="spacingAndGlyphs">เลขมิเตอร์เริ่มต้น</text>
<text x="646" y="452" font-size="12" text-anchor="end" textLength="21.0" lengthAdjust="spacingAndGlyphs">0.00</text>
<text x="673" y="452" font-size="11.6" textLength="82.7" lengthAdjust="spacingAndGlyphs">คำนวณภาษีค่าน้ำ</text>
<text x="791" y="451.5" font-size="12" textLength="7.2" lengthAdjust="spacingAndGlyphs">Y</text>
<text x="24" y="478" font-size="11.6" textLength="57.5" lengthAdjust="spacingAndGlyphs">การคิดค่าไฟ</text>
<text x="128" y="478.5" font-size="12" textLength="15.3" lengthAdjust="spacingAndGlyphs">1 =</text>
<text x="146.4" y="478.5" font-size="11.6" textLength="49.3" lengthAdjust="spacingAndGlyphs">ตามมิเตอร์</text>
<text x="367" y="478" font-size="11.6" textLength="52.8" lengthAdjust="spacingAndGlyphs">รหัสเงื่อนไข</text>
<text x="673" y="478" font-size="11.6" textLength="67.8" lengthAdjust="spacingAndGlyphs">ค่าไฟเหมาจ่าย</text>
<text x="980" y="478" font-size="12" text-anchor="end" textLength="21.0" lengthAdjust="spacingAndGlyphs">0.00</text>
<text x="24" y="505" font-size="11.6" textLength="65.1" lengthAdjust="spacingAndGlyphs">ค่าไฟต่อหน่วย</text>
<text x="304" y="505" font-size="12" text-anchor="end" textLength="21.0" lengthAdjust="spacingAndGlyphs">8.00</text>
<text x="367" y="505" font-size="11.6" textLength="80.0" lengthAdjust="spacingAndGlyphs">เลขมิเตอร์เริ่มต้น</text>
<text x="644" y="505" font-size="12" text-anchor="end" textLength="21.0" lengthAdjust="spacingAndGlyphs">0.00</text>
<text x="673" y="505" font-size="11.6" textLength="81.8" lengthAdjust="spacingAndGlyphs">คำนวณภาษีค่าไฟ</text>
<text x="791" y="504.5" font-size="12" textLength="7.2" lengthAdjust="spacingAndGlyphs">Y</text>
<text x="24" y="531" font-size="11.6" textLength="41.4" lengthAdjust="spacingAndGlyphs">ชนิดภาษี</text>
<text x="128" y="531.5" font-size="12" textLength="15.3" lengthAdjust="spacingAndGlyphs">1 =</text>
<text x="146.4" y="531.5" font-size="11.6" textLength="65.1" lengthAdjust="spacingAndGlyphs">สินค้ารวมภาษี</text>
<text x="367" y="531" font-size="11.6" textLength="44.9" lengthAdjust="spacingAndGlyphs">อัตราภาษี</text>
<text x="644" y="531" font-size="12" text-anchor="end" textLength="21.0" lengthAdjust="spacingAndGlyphs">7.00</text>
<text x="24" y="558" font-size="11.6" textLength="44.0" lengthAdjust="spacingAndGlyphs">หมายเหตุ</text>
<text x="673" y="558" font-size="11.6" textLength="30.8" lengthAdjust="spacingAndGlyphs">สถานะ</text>
<text x="787" y="558" font-size="11.6" font-weight="bold" fill="#0000ff" textLength="22.5" lengthAdjust="spacingAndGlyphs">ปกติ</text>
<text x="305.5" y="139" font-size="12.5" font-weight="bold" fill="#0000ff" textLength="8.4" lengthAdjust="spacingAndGlyphs">R</text></svg>
<svg id="logo" style="position:absolute;left:0;top:0" width="1020" height="615" viewBox="0 0 1020 615">
<defs>
<clipPath id="lgclip"><rect x="786" y="31" width="214" height="210"/></clipPath>
<radialGradient id="gl" cx="0.5" cy="0.5" r="0.5">
<stop offset="0.80" stop-color="#1a50ff" stop-opacity="1"/>
<stop offset="0.885" stop-color="#2a62ff" stop-opacity="0.98"/>
<stop offset="0.915" stop-color="#4a78ff" stop-opacity="0.66"/>
<stop offset="0.95" stop-color="#7a9cff" stop-opacity="0.36"/>
<stop offset="0.98" stop-color="#a8beff" stop-opacity="0.12"/>
<stop offset="1" stop-color="#c0d0ff" stop-opacity="0"/>
</radialGradient>
<radialGradient id="dk" cx="0.5" cy="0.5" r="0.5">
<stop offset="0" stop-color="#000"/>
<stop offset="0.79" stop-color="#000"/>
<stop offset="0.85" stop-color="#030c34"/>
<stop offset="0.895" stop-color="#08206c"/>
<stop offset="0.935" stop-color="#0e38b4"/>
<stop offset="0.968" stop-color="#164fe8"/>
<stop offset="1" stop-color="#1a5cff"/>
</radialGradient>
<linearGradient id="g1" x1="893" y1="65" x2="862" y2="98" gradientUnits="userSpaceOnUse"><stop offset="0" stop-color="#eef8ff"/><stop offset="0.45" stop-color="#b4dcf8"/><stop offset="1" stop-color="#86c0f0"/></linearGradient>
<linearGradient id="g2" x1="893" y1="66" x2="892" y2="98" gradientUnits="userSpaceOnUse"><stop offset="0" stop-color="#ffffff"/><stop offset="0.5" stop-color="#fffbd0"/><stop offset="1" stop-color="#ffe95e"/></linearGradient>
<linearGradient id="g3" x1="895" y1="68" x2="922" y2="100" gradientUnits="userSpaceOnUse"><stop offset="0" stop-color="#f4f8b8"/><stop offset="0.5" stop-color="#dcee86"/><stop offset="1" stop-color="#cbe472"/></linearGradient>
<linearGradient id="g4" x1="903" y1="95" x2="925" y2="102" gradientUnits="userSpaceOnUse"><stop offset="0" stop-color="#ffc247"/><stop offset="1" stop-color="#f6a53a"/></linearGradient>
<linearGradient id="g5" x1="862" y1="98" x2="893" y2="133" gradientUnits="userSpaceOnUse"><stop offset="0" stop-color="#5f97dc"/><stop offset="1" stop-color="#8ab4e6"/></linearGradient>
<linearGradient id="g6" x1="902" y1="106" x2="896" y2="132" gradientUnits="userSpaceOnUse"><stop offset="0" stop-color="#d88f8c"/><stop offset="1" stop-color="#f2b6a6"/></linearGradient>
<filter id="bl1" x="-20%" y="-20%" width="140%" height="140%"><feGaussianBlur stdDeviation="1.6"/></filter>
<filter id="bl2" x="-20%" y="-60%" width="140%" height="220%"><feGaussianBlur stdDeviation="2.6"/></filter>
<filter id="bl3" x="-10%" y="-10%" width="120%" height="120%"><feGaussianBlur stdDeviation="0.7"/></filter>
</defs>
<g clip-path="url(#lgclip)">
<ellipse cx="893" cy="127.3" rx="106" ry="104" fill="url(#gl)"/>
<ellipse cx="893" cy="127.3" rx="91" ry="89" fill="url(#dk)"/>
<ellipse cx="893" cy="127.3" rx="91" ry="89" fill="none" stroke="#1c5cff" stroke-width="8" filter="url(#bl3)"/>
<ellipse cx="893" cy="127.3" rx="91.3" ry="89.2" fill="none" stroke="#40d2ff" stroke-width="5.2" filter="url(#bl3)"/>
</g>
<g>
<polygon points="893.4,63.6 857.6,96.8 893.4,136.2 927,101.9" fill="#dff" opacity="0.75" filter="url(#bl1)"/>
<polygon points="893.4,64.6 859,96.8 879.5,106" fill="url(#g1)"/>
<polygon points="859,96.8 882,95.3 879.5,106" fill="#6c9fd8"/>
<polygon points="893.4,64.6 882,95.3 903.6,93.9" fill="url(#g2)"/>
<polygon points="893.4,64.6 903.6,93.9 925.6,101.9" fill="url(#g3)"/>
<polygon points="882,95.3 879.5,106 901.1,104.1 903.6,93.9" fill="#cfe07c"/>
<polygon points="903.6,93.9 901.1,104.1 925.6,101.9" fill="url(#g4)"/>
<polygon points="859,96.8 879.5,106 893.4,134.8" fill="url(#g5)"/>
<polygon points="879.5,106 901.1,104.1 893.4,134.8" fill="#7aa3d6"/>
<polygon points="901.1,104.1 925.6,101.9 893.4,134.8" fill="url(#g6)"/>
<path d="M893.4 64.6 L879.5 106 L893.4 134.8 M859 96.8 L879.5 106" stroke="#33465c" stroke-width="0.7" fill="none"/>
<path d="M879.5 106 L925.6 101.9" stroke="#5c6f60" stroke-width="0.5" fill="none" opacity="0.7"/>
<polygon points="893.4,64.6 859,96.8 893.4,134.8 925.6,101.9" fill="none" stroke="#e8f4f0" stroke-width="0.8" opacity="0.8"/>
</g>
<g font-family="'Liberation Sans',sans-serif" font-weight="bold" font-size="23">
<text x="831.5" y="162.6" textLength="127.5" fill="#1f5cff" stroke="#1f5cff" stroke-width="3" filter="url(#bl2)">BESETTA</text>
<text x="831.5" y="163.6" textLength="127.5" fill="#2a66ff" stroke="#2a66ff" stroke-width="1.5" filter="url(#bl1)">BESETTA</text>
<text x="831.5" y="162.6" textLength="127.5" fill="#fff" stroke="#fff" stroke-width="0.8">BESETTA</text>
</g>
</svg>

</div></body></html>
